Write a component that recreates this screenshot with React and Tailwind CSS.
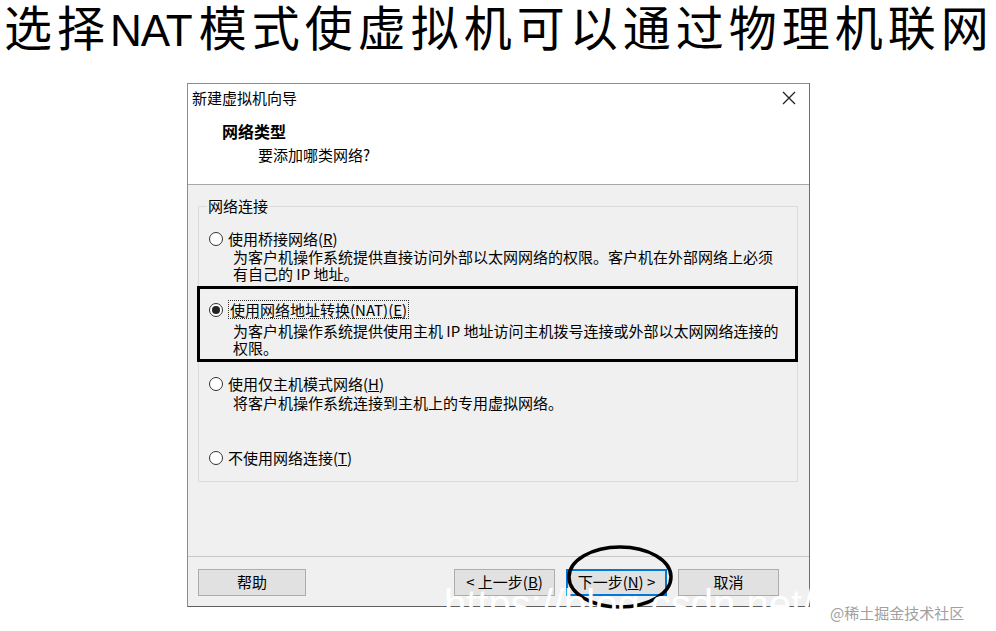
import React from 'react';

const ui = { fontFamily: '"Noto Sans CJK SC", "Liberation Sans", sans-serif' };

function Radio({ checked }) {
  return (
    <span className="w-[14px] h-[14px] shrink-0 rounded-full border border-[#333] bg-white flex items-center justify-center">
      {checked && <span className="w-[8px] h-[8px] rounded-full bg-[#222]" />}
    </span>
  );
}

function Option({ label, checked, focus, children }) {
  return (
    <div>
      <div className="flex items-center gap-[5px] h-[17px]">
        <Radio checked={checked} />
        <span className={focus ? 'border border-dotted border-[#333] px-px leading-[17px]' : 'leading-[17px]'}>
          {label}
        </span>
      </div>
      {children}
    </div>
  );
}

function Desc({ lines }) {
  return (
    <div className="pl-[24px] mt-px">
      {lines.map((l) => (
        <div key={l} className="leading-[17px] h-[17px] whitespace-nowrap">{l}</div>
      ))}
    </div>
  );
}

function Btn({ children, primary, wide }) {
  return (
    <button
      className={
        'h-[27px] bg-[#e1e1e1] text-[15px] text-black flex items-center justify-center ' +
        (wide ? 'w-[108px] ' : 'w-[101px] ') +
        (primary ? 'border-2 border-[#0078d7]' : 'border border-[#adadad]')
      }
    >
      {children}
    </button>
  );
}

export default function App() {
  return (
    <div className="relative w-[996px] h-[631px] bg-white overflow-hidden" style={ui}>
      <h1 className="h-[50px] pl-[4px] text-[48px] leading-[50px] tracking-[5px] font-normal text-black whitespace-nowrap">
        选择<span className="text-[44px] tracking-[-1px] mr-[7px]" style={{ fontFamily: '"Liberation Sans", sans-serif' }}>NAT</span>模式使虚拟机可以通过物理机联网
      </h1>

      <div className="ml-[187px] mt-[33px] w-[623px] h-[524px] border border-[#8c8c8c] border-r-[#6e6e6e] border-b-[#5f5f5f] flex flex-col text-[15px] text-black">
        <div className="h-[101px] bg-white border-b border-[#a8a8a8] shrink-0">
          <div className="h-[28px] flex items-center justify-between pl-[4px] pr-[13px]">
            <span className="text-[15px]">新建虚拟机向导</span>
            <svg width="14" height="14" viewBox="0 0 14 14" className="shrink-0">
              <path d="M1 1 L13 13 M13 1 L1 13" stroke="#222" strokeWidth="1.3" />
            </svg>
          </div>
          <div className="pl-[34px] mt-[11px] font-bold text-[16px] leading-[17px]">网络类型</div>
          <div className="pl-[70px] mt-[6px] leading-[17px]">要添加哪类网络?</div>
        </div>

        <div className="flex-1 bg-[#f0f0f0] flex flex-col">
          <div className="relative mt-[21px] ml-[10px] mr-[11px] border border-[#dcdcdc] pt-[23px] pb-[15px]">
            <span className="absolute left-[8px] -top-[10px] bg-[#f0f0f0] px-px leading-[17px]">网络连接</span>

            <div className="pl-[10px]">
              <Option label={<>使用桥接网络(<u>R</u>)</>}>
                <Desc lines={['为客户机操作系统提供直接访问外部以太网网络的权限。客户机在外部网络上必须', '有自己的 IP 地址。']} />
              </Option>
            </div>

            <div className="-ml-[2px] -mr-px mt-[4px] border-[3px] border-black pl-[9px] pt-[12px] pb-[3px]">
              <Option label={<>使用网络地址转换(NAT)(<u>E</u>)</>} checked focus>
                <div className="mt-[4px]">
                  <Desc lines={['为客户机操作系统提供使用主机 IP 地址访问主机拨号连接或外部以太网网络连接的', '权限。']} />
                </div>
              </Option>
            </div>

            <div className="pl-[10px] mt-[13px]">
              <Option label={<>使用仅主机模式网络(<u>H</u>)</>}>
                <div className="mt-[2px]">
                  <Desc lines={['将客户机操作系统连接到主机上的专用虚拟网络。']} />
                </div>
              </Option>
            </div>

            <div className="pl-[10px] mt-[38px]">
              <Option label={<>不使用网络连接(<u>T</u>)</>} />
            </div>
          </div>

          <div className="flex-1" />

          <div className="h-[50px] border-t border-[#c8c8c8] pt-[12px] flex items-start pl-[10px] pr-[30px]">
            <Btn wide>帮助</Btn>
            <div className="flex-1" />
            <div className="flex gap-[11px]">
              <Btn>&lt; 上一步(<u>B</u>)</Btn>
              <Btn primary>下一步(<u>N</u>) &gt;</Btn>
              <Btn>取消</Btn>
            </div>
          </div>
        </div>
      </div>

      <svg className="absolute left-[566px] top-[544px]" width="108" height="66" viewBox="0 0 108 66">
        <ellipse cx="54" cy="33" rx="51" ry="30" fill="none" stroke="#000" strokeWidth="3.5" />
      </svg>

      <div
        className="absolute left-[444px] top-[581px] text-[40px] leading-[46px] text-white whitespace-nowrap"
        style={{ fontFamily: '"Liberation Sans", sans-serif' }}
      >
        https://blog.csdn.net/
      </div>

      <div className="absolute left-[830px] top-[603px] text-[15px] leading-[20px] text-[#a0a0a0] whitespace-nowrap">
        @稀土掘金技术社区
      </div>
    </div>
  );
}
